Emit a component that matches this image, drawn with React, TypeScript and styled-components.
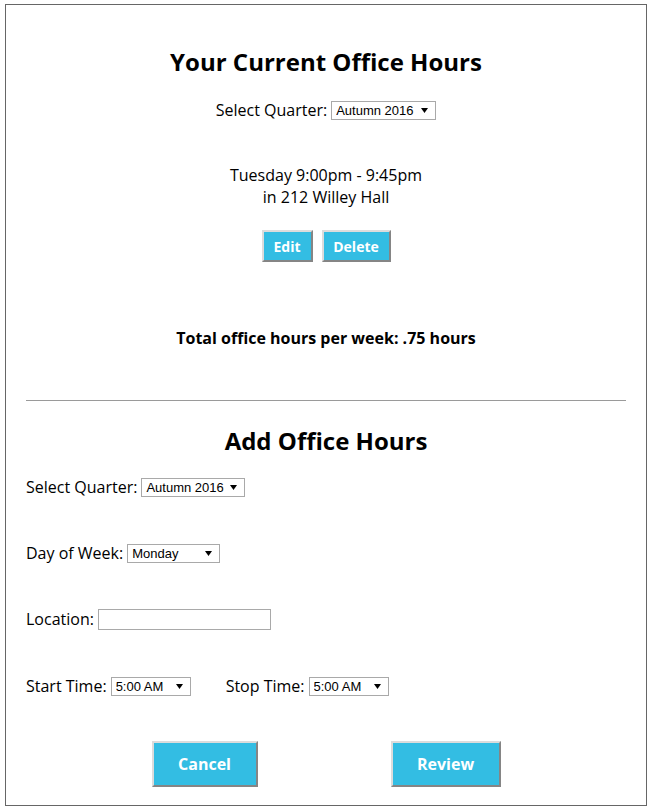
import styled, { createGlobalStyle } from 'styled-components';

const GlobalStyle = createGlobalStyle`
  html, body {
    margin: 0;
    padding: 0;
    background: #fff;
  }
  body {
    font-family: "Open Sans", "Liberation Sans", sans-serif;
    color: #000;
  }
`;

const arrow =
  "url(\"data:image/svg+xml;utf8,<svg xmlns='http://www.w3.org/2000/svg' width='7' height='5'><path d='M0 0h7L3.5 5z' fill='black'/></svg>\")";

const Page = styled.div`
  padding: 4px 6px 5px 5px;
`;

const Box = styled.div`
  box-sizing: border-box;
  width: 642px;
  height: 802px;
  border: 1px solid #666;
  padding: 41px 20px 0 20px;
  display: flex;
  flex-direction: column;
`;

const Heading = styled.h1`
  margin: 0;
  font-size: 24px;
  line-height: 32px;
  font-weight: 700;
  text-align: center;
`;

const Row = styled.div<{ $center?: boolean; $top: number }>`
  display: flex;
  align-items: center;
  justify-content: ${(p) => (p.$center ? 'center' : 'flex-start')};
  margin-top: ${(p) => p.$top}px;
  font-size: 16px;
  line-height: 20px;
  height: 20px;
`;

const Label = styled.label`
  margin-right: 4px;
`;

const Select = styled.select<{ $w: number }>`
  appearance: none;
  box-sizing: border-box;
  width: ${(p) => p.$w}px;
  height: 19px;
  border: 1px solid #a9a9a9;
  border-radius: 0;
  background: #fff ${arrow} no-repeat right 7px center;
  font-family: "Liberation Sans", Arial, sans-serif;
  font-size: 13px;
  color: #000;
  padding: 0 0 0 4px;
  margin: 0;
`;

const TextInput = styled.input`
  box-sizing: border-box;
  width: 173px;
  height: 21px;
  border: 1px solid #a9a9a9;
  padding: 0 4px;
  margin: 0;
`;

const Slot = styled.p`
  margin: 44px 0 0;
  font-size: 16px;
  line-height: 22px;
  text-align: center;
`;

const ButtonRow = styled.div<{ $top: number; $gap: number }>`
  display: flex;
  justify-content: center;
  gap: ${(p) => p.$gap}px;
  margin-top: ${(p) => p.$top}px;
`;

const Button = styled.button<{ $w: number; $h: number; $size: number }>`
  box-sizing: border-box;
  width: ${(p) => p.$w}px;
  height: ${(p) => p.$h}px;
  background: #33bde3;
  color: #fff;
  font-family: "Open Sans", "Liberation Sans", sans-serif;
  font-weight: 700;
  font-size: ${(p) => p.$size}px;
  border-style: solid;
  border-width: 2px;
  border-color: #dcdcdc #858585 #858585 #dcdcdc;
  padding: 0;
  cursor: pointer;
`;

const Total = styled.p`
  margin: 65px 0 0;
  font-size: 16px;
  line-height: 22px;
  font-weight: 700;
  text-align: center;
`;

const Divider = styled.hr`
  margin: 51px 0 0;
  border: 0;
  border-top: 1px solid #9a9a9a;
  height: 0;
`;

const SubHeading = styled(Heading)`
  margin-top: 24px;
`;

const Spacer = styled.span`
  width: 35px;
`;

const quarters = ['Autumn 2016', 'Winter 2017', 'Spring 2017', 'Summer 2017'];
const days = ['Monday', 'Tuesday', 'Wednesday', 'Thursday', 'Friday'];
const times = ['5:00 AM', '5:15 AM', '5:30 AM', '5:45 AM', '6:00 AM'];

export default function App() {
  return (
    <Page>
      <GlobalStyle />
      <Box>
        <Heading>Your Current Office Hours</Heading>
        <Row $center $top={22}>
          <Label>Select Quarter:</Label>
          <Select $w={105} defaultValue={quarters[0]}>
            {quarters.map((q) => (
              <option key={q}>{q}</option>
            ))}
          </Select>
        </Row>
        <Slot>
          Tuesday 9:00pm - 9:45pm
          <br />
          in 212 Willey Hall
        </Slot>
        <ButtonRow $top={22} $gap={9}>
          <Button $w={51} $h={32} $size={14}>Edit</Button>
          <Button $w={69} $h={32} $size={14}>Delete</Button>
        </ButtonRow>
        <Total>Total office hours per week: .75 hours</Total>
        <Divider />
        <SubHeading>Add Office Hours</SubHeading>
        <Row $top={20}>
          <Label>Select Quarter:</Label>
          <Select $w={104} defaultValue={quarters[0]}>
            {quarters.map((q) => (
              <option key={q}>{q}</option>
            ))}
          </Select>
        </Row>
        <Row $top={46}>
          <Label>Day of Week:</Label>
          <Select $w={93} defaultValue={days[0]}>
            {days.map((d) => (
              <option key={d}>{d}</option>
            ))}
          </Select>
        </Row>
        <Row $top={46}>
          <Label>Location:</Label>
          <TextInput type="text" />
        </Row>
        <Row $top={47}>
          <Label>Start Time:</Label>
          <Select $w={80} defaultValue={times[0]}>
            {times.map((t) => (
              <option key={t}>{t}</option>
            ))}
          </Select>
          <Spacer />
          <Label>Stop Time:</Label>
          <Select $w={80} defaultValue={times[0]}>
            {times.map((t) => (
              <option key={t}>{t}</option>
            ))}
          </Select>
        </Row>
        <ButtonRow $top={45} $gap={133}>
          <Button $w={106} $h={46} $size={16}>Cancel</Button>
          <Button $w={110} $h={46} $size={16}>Review</Button>
        </ButtonRow>
      </Box>
    </Page>
  );
}
